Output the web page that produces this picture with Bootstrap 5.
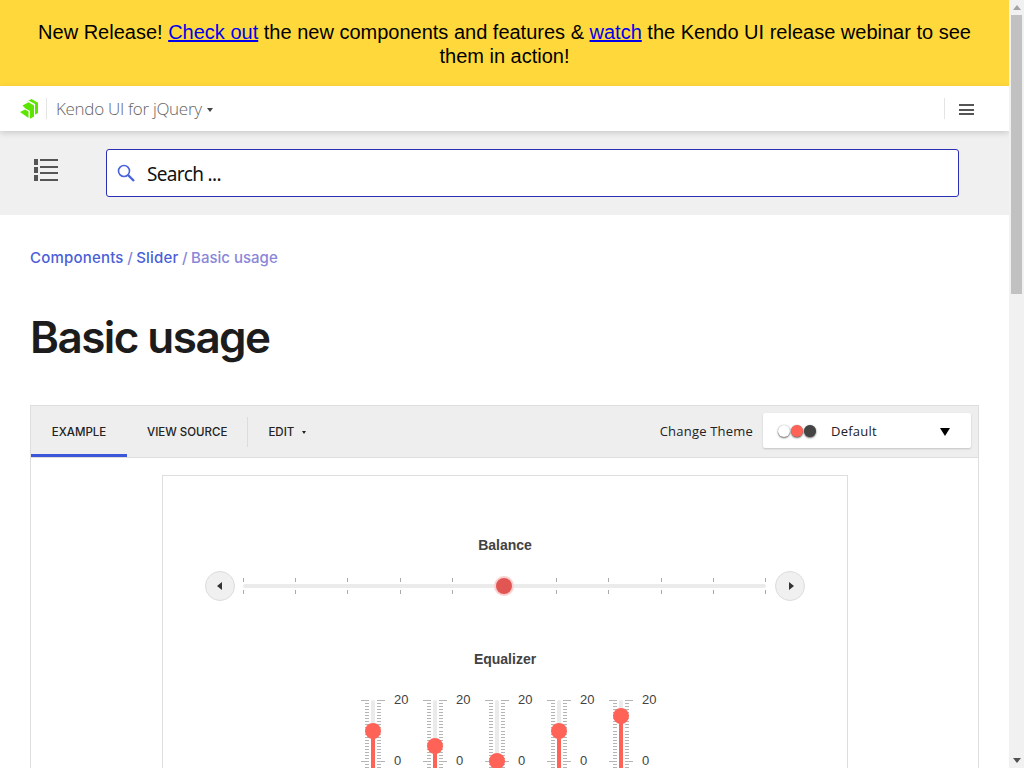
<!DOCTYPE html>
<html lang="en">
<head>
<meta charset="utf-8">
<title>Basic usage</title>
<link href="https://cdn.jsdelivr.net/npm/bootstrap@5.3.0/dist/css/bootstrap.min.css" rel="stylesheet">
<style>
html,body{height:768px;overflow:hidden;margin:0}
body{font-family:"Liberation Sans",Arial,sans-serif;background:#fff}
.shell{height:768px;overflow:hidden}
.pagecol{width:1009px;flex:none;height:768px;overflow:hidden}
.fakebar{width:15px;flex:none;height:768px;background:#f1f1f1;position:relative}
.fakebar-thumb{position:absolute;left:2px;right:2px;top:15px;height:279px;background:#c1c1c1}
.fakebar-up,.fakebar-down{position:absolute;left:4px;width:0;height:0;border-left:4px solid transparent;border-right:4px solid transparent}
.fakebar-up{top:5px;border-bottom:5px solid #a3a3a3}
.fakebar-down{bottom:5px;border-top:5px solid #505050}
.promo{background:#ffd93b;color:#000;font-size:20px;line-height:24px;padding:20px 24px 18px;text-align:center;height:86px}
.promo a{color:#00e}
.topnav{height:45px;background:#fff;box-shadow:0 2px 6px rgba(0,0,0,.16);position:relative;z-index:2;padding:0 35px 0 20px;font-family:"Open Sans",sans-serif}
.vsep{width:1px;height:21px;background:#e4e4e4}
.product{font-size:17px;color:#656565;margin-left:9px;font-weight:300;letter-spacing:-.3px}
.mini-caret{display:inline-block;border-left:3.5px solid transparent;border-right:3.5px solid transparent;border-top:4px solid #444;margin-left:5px;vertical-align:3px}
.tiny-caret{display:inline-block;border-left:2.5px solid transparent;border-right:2.5px solid transparent;border-top:3px solid #222;margin-left:8px;vertical-align:2px}
.burger{width:15px;height:11px;margin:2px 0 0 14px;background:linear-gradient(#555 0 2px,transparent 2px 4.5px,#555 4.5px 6.5px,transparent 6.5px 9px,#555 9px 11px)}
.searchband{height:84px;background:#f0f0f0;padding:18px 50px 18px 34px}
.listicon{margin-bottom:6px}
.searchbox{flex:1;height:48px;margin-left:48px;background:#fff;border:1px solid #2b2fb3;border-radius:3px;padding-left:10px;font-family:"Noto Sans",sans-serif;font-size:19px;color:#111;letter-spacing:-.65px}
.searchbox span{margin-left:12px;margin-top:3px}
.crumbs{padding:33px 30px 0;font-family:Inter,sans-serif;font-size:15px;font-weight:500;line-height:20px;color:#8a86d8;display:flex;gap:3.5px}
.crumbs a{color:#4a5fd8;text-decoration:none;letter-spacing:.2px}
.pagetitle{margin:39px 30px 0;font-family:Inter,sans-serif;font-size:44px;font-weight:600;line-height:60px;color:#1c1c1c;letter-spacing:-1.55px}
.demo{margin:38px 30px 0;border:1px solid #dedede;height:400px}
.demohead{height:52px;background:#eee;border-bottom:1px solid #dedede;font-family:"Open Sans",sans-serif;font-size:12px;color:#222}
.tabx{padding:2px 20px 0;height:51px;font-family:Inter,sans-serif;font-size:11.5px;font-weight:500;color:#222}
.tabx.on{border-bottom:3px solid #3d55d9;width:96px;justify-content:center;padding:5px 0 0}
.tabsep{width:1px;height:30px;background:#dcdcdc}
.themelabel{font-size:13px;letter-spacing:.2px}
.themepick{margin:0 7px 2px 10px;width:208px;height:35px;background:#fff;border-radius:2px;box-shadow:0 1px 2px rgba(0,0,0,.18);padding:3px 21px 0 15px;font-size:13px;letter-spacing:.25px}
.swatches{width:38px;height:14px;position:relative;margin-right:15px}
.dot{position:absolute;top:0;width:12px;height:12px;border-radius:50%;box-shadow:0 1px 2px rgba(0,0,0,.6),0 0 1px rgba(0,0,0,.3)}
.bigcaret{border-left:5.5px solid transparent;border-right:5.5px solid transparent;border-top:8px solid #000}
.stage{width:686px;margin:17px 0 0 131px;border:1px solid #dedede;height:400px;padding-top:60px;font-size:14px;color:#424242}
.cap{font-weight:700;text-align:center;line-height:18px}
.cap-second{margin-top:49px}
.hslider{height:30px;margin:17px 42px 0}
.stepbtn{width:30px;height:30px;border-radius:50%;background:#f0f0f0;border:1px solid #dcdcdc;flex:none}
.tri-l{border-top:4px solid transparent;border-bottom:4px solid transparent;border-right:5px solid #333;margin-right:2px}
.tri-r{border-top:4px solid transparent;border-bottom:4px solid transparent;border-left:5px solid #333;margin-left:2px}
.hrail{flex:1;height:30px;margin:0 9px 0 8px;position:relative}
.hfill{position:absolute;left:0;right:0;top:13px;height:4px;background:#ebebeb;border-radius:2px}
.hticks{position:absolute;left:0;right:0;top:7px;height:16px;display:flex;justify-content:space-between}
.htick{width:1px;background:linear-gradient(#aaa 0 4px,transparent 4px 12px,#aaa 12px 16px)}
.hthumb{position:absolute;left:253px;top:7px;width:16px;height:16px;border-radius:50%;background:#e15553;box-shadow:0 0 0 2px #fbd0cf}
.eqrow{margin:32px 0 0 198px}
.vslide{width:62px;height:80px;position:relative;flex:none}
.vrail{position:absolute;left:10px;top:0;width:4px;height:90px;background:#ebebeb;border-radius:2px 2px 0 0}
.vfill{position:absolute;left:10px;width:4px;bottom:-10px;background:#ff6358}
.vknob{position:absolute;left:4px;width:16px;height:16px;border-radius:50%;background:#ff6358}
.tk{position:absolute;top:0;width:4px;height:70px;background:repeating-linear-gradient(#b4b4b4 0 1px,transparent 1px 3.05px)}
.tk-l{left:4px}.tk-r{left:16px}
.major{position:absolute;width:8px;height:1px;background:#b4b4b4}
.mj-a{left:0;top:0}.mj-b{left:16px;top:0}.mj-c{left:0;top:61px}.mj-d{left:16px;top:61px}
.num{position:absolute;left:33px;line-height:16px;font-size:13px;color:#424242}
.num-hi{top:-8px}.num-lo{top:53px}
.val10 .vknob{top:23px}.val10 .vfill{top:31px}
.val5 .vknob{top:38px}.val5 .vfill{top:46px}
.val0 .vknob{top:53px}.val0 .vfill{top:61px}
.val15 .vknob{top:8px}.val15 .vfill{top:16px}
</style>
</head>
<body>
<div class="shell d-flex">
<div class="pagecol">
  <div class="promo">New Release! <a href="#">Check out</a> the new components and features &amp; <a href="#">watch</a> the Kendo UI release webinar to see them in action!</div>
  <nav class="topnav d-flex align-items-center">
    <svg width="18" height="20" viewBox="0 0 18 20" aria-hidden="true"><path d="M6 3 11.5 0 18 3.7V14l-3 1.8V5L9 1.8z" fill="#5ce500"/><path d="M2.5 6.5 8.5 3.3 14 6.5V17.5L10 19.7V12L5.5 9.5z" fill="#5ce500"/><path d="M0 13l5-2.5 3.5 2v6.5z" fill="#5ce500"/></svg>
    <div class="vsep ms-2"></div>
    <span class="product">Kendo UI for jQuery<span class="mini-caret"></span></span>
    <div class="vsep ms-auto"></div>
    <div class="burger"></div>
  </nav>
  <div class="searchband d-flex align-items-center">
    <svg class="listicon" width="24" height="22" viewBox="0 0 24 22" aria-hidden="true"><g fill="#555"><rect y="0" width="4" height="6"/><rect y="8" width="4" height="6"/><rect y="16" width="4" height="6"/></g><g fill="#555"><rect x="6" y="0" width="18" height="2"/><rect x="6" y="7" width="18" height="2"/><rect x="6" y="13" width="18" height="2"/><rect x="6" y="20" width="18" height="2"/></g></svg>
    <div class="searchbox d-flex align-items-center">
      <svg width="18" height="18" viewBox="0 0 18 18" aria-hidden="true"><circle cx="7" cy="7" r="5.5" fill="none" stroke="#4a63dc" stroke-width="1.6"/><path d="M11 11l6 6" stroke="#4a63dc" stroke-width="2.4"/></svg>
      <span>Search ...</span>
    </div>
  </div>
  <div class="crumbs"><a href="#">Components</a><span>/</span><a href="#">Slider</a><span>/</span><span>Basic usage</span></div>
  <h1 class="pagetitle">Basic usage</h1>
  <div class="demo">
    <div class="demohead d-flex align-items-center">
      <div class="tabx on d-flex align-items-center align-self-start">EXAMPLE</div>
      <div class="tabx d-flex align-items-center align-self-start">VIEW SOURCE</div>
      <div class="tabsep"></div>
      <div class="tabx d-flex align-items-center align-self-start">EDIT<span class="tiny-caret"></span></div>
      <span class="themelabel ms-auto">Change Theme</span>
      <div class="themepick d-flex align-items-center">
        <div class="swatches"><span class="dot" style="left:0;background:#fff"></span><span class="dot" style="left:13px;background:#ff6358"></span><span class="dot" style="left:26px;background:#444"></span></div>
        <span>Default</span>
        <span class="bigcaret ms-auto"></span>
      </div>
    </div>
    <div class="stage">
      <div class="cap">Balance</div>
      <div class="hslider d-flex align-items-center">
        <div class="stepbtn d-flex align-items-center justify-content-center"><span class="tri-l"></span></div>
        <div class="hrail">
          <div class="hfill"></div>
          <div class="hticks"><i class="htick"></i><i class="htick"></i><i class="htick"></i><i class="htick"></i><i class="htick"></i><i class="htick"></i><i class="htick"></i><i class="htick"></i><i class="htick"></i><i class="htick"></i><i class="htick"></i></div>
          <div class="hthumb"></div>
        </div>
        <div class="stepbtn d-flex align-items-center justify-content-center"><span class="tri-r"></span></div>
      </div>
      <div class="cap cap-second">Equalizer</div>
      <div class="eqrow d-flex">
        <div class="vslide val10"><i class="tk tk-l"></i><i class="tk tk-r"></i><i class="major mj-a"></i><i class="major mj-b"></i><i class="major mj-c"></i><i class="major mj-d"></i><div class="vrail"></div><div class="vfill"></div><div class="vknob"></div><span class="num num-hi">20</span><span class="num num-lo">0</span></div>
        <div class="vslide val5"><i class="tk tk-l"></i><i class="tk tk-r"></i><i class="major mj-a"></i><i class="major mj-b"></i><i class="major mj-c"></i><i class="major mj-d"></i><div class="vrail"></div><div class="vfill"></div><div class="vknob"></div><span class="num num-hi">20</span><span class="num num-lo">0</span></div>
        <div class="vslide val0"><i class="tk tk-l"></i><i class="tk tk-r"></i><i class="major mj-a"></i><i class="major mj-b"></i><i class="major mj-c"></i><i class="major mj-d"></i><div class="vrail"></div><div class="vfill"></div><div class="vknob"></div><span class="num num-hi">20</span><span class="num num-lo">0</span></div>
        <div class="vslide val10"><i class="tk tk-l"></i><i class="tk tk-r"></i><i class="major mj-a"></i><i class="major mj-b"></i><i class="major mj-c"></i><i class="major mj-d"></i><div class="vrail"></div><div class="vfill"></div><div class="vknob"></div><span class="num num-hi">20</span><span class="num num-lo">0</span></div>
        <div class="vslide val15"><i class="tk tk-l"></i><i class="tk tk-r"></i><i class="major mj-a"></i><i class="major mj-b"></i><i class="major mj-c"></i><i class="major mj-d"></i><div class="vrail"></div><div class="vfill"></div><div class="vknob"></div><span class="num num-hi">20</span><span class="num num-lo">0</span></div>
      </div>
    </div>
  </div>
</div>
<div class="fakebar"><div class="fakebar-up"></div><div class="fakebar-thumb"></div><div class="fakebar-down"></div></div>
</div>
</body>
</html>
